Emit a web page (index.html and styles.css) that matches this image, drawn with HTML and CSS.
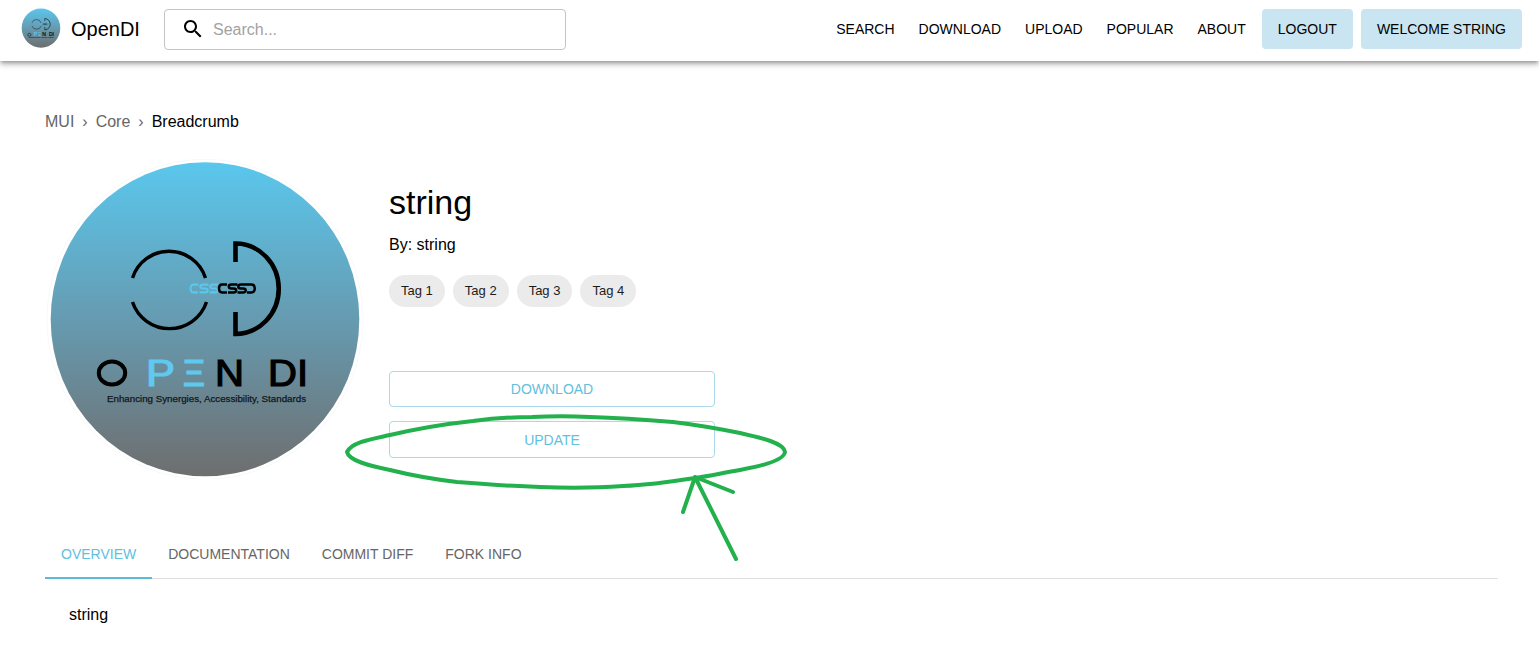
FILE: index.html
```html
<!DOCTYPE html>
<html lang="en">
<head>
<meta charset="utf-8">
<title>OpenDI</title>
<link rel="stylesheet" href="styles.css">
</head>
<body>
<svg class="defs" width="0" height="0" aria-hidden="true">
  <defs>
    <linearGradient id="logoFill" x1="0" y1="0" x2="0" y2="1">
      <stop offset="0" stop-color="#5ac7ed"/>
      <stop offset="0.5" stop-color="#669bb1"/>
      <stop offset="1" stop-color="#6e6e6e"/>
    </linearGradient>
    <symbol id="logo" viewBox="45 159 320 320">
      <ellipse cx="205" cy="319.300" rx="158" ry="160" fill="#fff" stroke="#f6f9fb" stroke-width="1"/>
      <ellipse cx="205" cy="319.300" rx="154.300" ry="157" fill="url(#logoFill)"/>
      <g fill="none" stroke="#000" stroke-width="3.400">
        <path d="M132.500 278A38.300 38.300 0 0 1 205.500 278"/>
        <path d="M132.500 302A39 39 0 0 0 206.500 302"/>
      </g>
      <path d="M235.500 262V243.500A43 45 0 0 1 235.500 334V312" fill="none" stroke="#000" stroke-width="4.600"/>
      <g fill="none" stroke-width="2.100">
        <g stroke="#5cc6ec">
          <path d="M198.500 284.600H193.500Q190.600 284.600 190.600 288.500Q190.600 292.400 193.500 292.400H198"/>
          <path d="M208.500 284.600H203Q200.300 284.600 200.300 286.500Q200.300 288.500 203 288.500H205Q207.700 288.500 207.700 290.500Q207.700 292.400 205 292.400H199.500"/>
          <path d="M218.500 284.600H213Q210.300 284.600 210.300 286.500Q210.300 288.500 213 288.500H215Q217.700 288.500 217.700 290.500Q217.700 292.400 215 292.400H209.500"/>
        </g>
        <g stroke="#000" stroke-width="2.500">
          <path d="M227 284.600H222Q219 284.600 219 288.500Q219 292.400 222 292.400H227"/>
          <path d="M237.500 284.600H231.500Q228.800 284.600 228.800 286.500Q228.800 288.500 231.500 288.500H233.500Q236.200 288.500 236.200 290.500Q236.200 292.400 233.500 292.400H228"/>
          <path d="M247 284.600H241Q238.300 284.600 238.300 286.500Q238.300 288.500 241 288.500H243Q245.700 288.500 245.700 290.500Q245.700 292.400 243 292.400H237.500"/>
          <path d="M247 284.600H251.500Q254.800 284.600 254.800 288.500Q254.800 292.400 251.500 292.400H247"/>
        </g>
      </g>
      <ellipse cx="112" cy="373" rx="13.200" ry="11.500" fill="none" stroke="#000" stroke-width="4"/>
      <text x="146" y="386" class="logo-mark logo-blue" textLength="29" lengthAdjust="spacingAndGlyphs">P</text>
      <text x="183" y="386" class="logo-mark logo-blue" textLength="22" lengthAdjust="spacingAndGlyphs">Ξ</text>
      <text x="215" y="386" class="logo-mark" textLength="29" lengthAdjust="spacingAndGlyphs">N</text>
      <text x="268" y="386" class="logo-mark" textLength="40" lengthAdjust="spacingAndGlyphs">DI</text>
      <text x="107" y="402" class="logo-tag" textLength="199" lengthAdjust="spacingAndGlyphs">Enhancing Synergies, Accessibility, Standards</text>
    </symbol>
  </defs>
</svg>

<header class="topbar">
  <div class="brand">
    <svg class="brand-logo" viewBox="0 0 40 40" role="img" aria-label="OpenDI logo"><use href="#logo" width="40" height="40"/></svg>
    <span class="brand-name">OpenDI</span>
  </div>
  <label class="search">
    <svg class="search-icon" viewBox="0 0 24 24" aria-hidden="true"><path d="M15.500 14h-.79l-.28-.27C15.410 12.590 16 11.110 16 9.500 16 5.910 13.090 3 9.500 3S3 5.910 3 9.500 5.910 16 9.500 16c1.610 0 3.090-.59 4.230-1.570l.27.28v.79l5 4.990L20.490 19l-4.990-5zm-6 0C7.010 14 5 11.990 5 9.500S7.010 5 9.500 5 14 7.010 14 9.500 11.990 14 9.500 14z"/></svg>
    <input class="search-input" type="text" placeholder="Search...">
  </label>
  <nav class="nav">
    <a class="nav-link">SEARCH</a>
    <a class="nav-link">DOWNLOAD</a>
    <a class="nav-link">UPLOAD</a>
    <a class="nav-link">POPULAR</a>
    <a class="nav-link">ABOUT</a>
    <div class="nav-actions">
      <a class="nav-button">LOGOUT</a>
      <a class="nav-button">WELCOME STRING</a>
    </div>
  </nav>
</header>

<main class="page">
  <ol class="crumbs">
    <li class="crumb">MUI</li>
    <li class="crumb-sep">›</li>
    <li class="crumb">Core</li>
    <li class="crumb-sep">›</li>
    <li class="crumb crumb-current">Breadcrumb</li>
  </ol>

  <section class="hero">
    <svg class="hero-logo" viewBox="0 0 320 320" role="img" aria-label="Open DI logo"><use href="#logo" width="320" height="320"/></svg>
    <div class="info">
      <h1 class="title">string</h1>
      <p class="author">By: string</p>
      <ul class="tags">
        <li class="tag">Tag 1</li>
        <li class="tag">Tag 2</li>
        <li class="tag">Tag 3</li>
        <li class="tag">Tag 4</li>
      </ul>
      <div class="actions">
        <button class="action action-download" type="button">DOWNLOAD</button>
        <button class="action action-update" type="button">UPDATE</button>
      </div>
    </div>
  </section>

  <div class="tabs">
    <a class="tab tab-active">OVERVIEW</a>
    <a class="tab">DOCUMENTATION</a>
    <a class="tab">COMMIT DIFF</a>
    <a class="tab">FORK INFO</a>
  </div>
  <p class="panel">string</p>
</main>

<svg class="annotation" viewBox="0 0 1539 672" aria-hidden="true">
  <path d="M347 452C352 442 372 439 390 435C420 428 445 424 473 421C495 418 512 417 532 417C552 416 570 416 590 417C620 418 648 420 673 422C698 425 720 429 740 433C762 438 784 443 785 452C784 460 762 466 740 470C722 473 710 476 695 478C670 482 648 485 623 486C595 488 568 488 540 487C510 486 482 484 457 482C432 479 410 475 390 470C370 466 349 461 347 452Z" fill="none" stroke="#22b14c" stroke-width="4" stroke-linejoin="round"/>
  <path d="M736 559L695 477M695 477L683 512M695 477L733 492" fill="none" stroke="#22b14c" stroke-width="4" stroke-linecap="round"/>
</svg>
</body>
</html>
```

FILE: styles.css
```css
* {
  box-sizing: border-box;
}

html,
body {
  margin: 0;
  padding: 0;
  background: #fff;
}

body {
  position: relative;
  width: 1539px;
  height: 672px;
  overflow: hidden;
  font-family: "Liberation Sans", Arial, sans-serif;
  color: #000;
}

.defs {
  display: block;
  width: 0;
  height: 0;
}

.logo-mark {
  font-family: "Liberation Sans", Arial, sans-serif;
  font-size: 36px;
  fill: #000;
  stroke: #000;
  stroke-width: 1.2px;
}

.logo-blue {
  fill: #5fc9f0;
  stroke: #5fc9f0;
}

.logo-tag {
  font-family: "Liberation Sans", Arial, sans-serif;
  font-size: 9px;
  fill: #10181c;
  stroke: #10181c;
  stroke-width: 0.25px;
}

/* Top bar */
.topbar {
  display: flex;
  align-items: center;
  height: 61px;
  padding: 0 17px 3px 21px;
  background: #fff;
  box-shadow: 0 2px 4px -1px rgba(0, 0, 0, 0.3), 0 4px 5px 0 rgba(0, 0, 0, 0.16), 0 1px 10px 0 rgba(0, 0, 0, 0.1);
}

.brand {
  display: flex;
  align-items: center;
  gap: 10px;
  width: 143px;
  flex: none;
}

.brand-logo {
  width: 40px;
  height: 40px;
  margin-top: -3px;
  flex: none;
}

.brand-name {
  font-size: 20px;
}

.search {
  display: flex;
  align-items: center;
  gap: 8px;
  width: 402px;
  height: 41px;
  padding: 0 16px;
  border: 1px solid #c4c4c4;
  border-radius: 4px;
  flex: none;
}

.search-icon {
  width: 24px;
  height: 24px;
  flex: none;
}

.search-input {
  flex: 1;
  min-width: 0;
  border: 0;
  outline: 0;
  padding: 1px 0 0;
  font: 16px "Liberation Sans", Arial, sans-serif;
  background: transparent;
}

.search-input::placeholder {
  color: #a2a2a2;
  opacity: 1;
}

.nav {
  display: flex;
  align-items: center;
  gap: 24px;
  margin-left: auto;
  font-size: 14px;
}

.nav-actions {
  display: flex;
  gap: 8px;
  margin-left: -8px;
}

.nav-button {
  display: flex;
  align-items: center;
  height: 40px;
  padding: 0 16px;
  background: #c9e5f1;
  border-radius: 4px;
}

/* Page */
.page {
  padding: 52px 41px 0 45px;
}

.crumbs {
  display: flex;
  gap: 8px;
  margin: 0;
  padding: 0;
  list-style: none;
  font-size: 16px;
  line-height: 18px;
  color: #666;
}

.crumb-current {
  color: #000;
}

.hero {
  display: flex;
  gap: 24px;
  margin-top: 28px;
}

.hero-logo {
  display: block;
  width: 320px;
  height: 320px;
  flex: none;
}

.info {
  width: 326px;
  padding-top: 23px;
}

.title {
  margin: 0;
  font-size: 34px;
  font-weight: 400;
  line-height: 40px;
}

.author {
  margin: 14px 0 0;
  font-size: 16px;
  line-height: 18px;
}

.tags {
  display: flex;
  gap: 8px;
  margin: 21px 0 0;
  padding: 0;
  list-style: none;
}

.tag {
  display: flex;
  align-items: center;
  height: 32px;
  padding: 0 12px 1px;
  border-radius: 16px;
  background: #ebebeb;
  font-size: 13px;
  color: #1c1c1c;
}

.actions {
  display: flex;
  flex-direction: column;
  gap: 14px;
  margin-top: 64px;
}

.action {
  width: 100%;
  padding: 0;
  border: 1px solid #a9d9ea;
  border-radius: 4px;
  background: #fff;
  color: #5fc0e0;
  font: 14px "Liberation Sans", Arial, sans-serif;
}

.action-download {
  height: 36px;
}

.action-update {
  height: 37px;
}

.tabs {
  display: flex;
  height: 48px;
  margin-top: 52px;
  border-bottom: 1px solid #e0e0e0;
}

.tab {
  display: flex;
  align-items: center;
  height: 48px;
  padding: 0 16px;
  border-bottom: 2px solid transparent;
  font-size: 14px;
  color: #666;
}

.tab-active {
  color: #5fc0e0;
  border-bottom-color: #5cb9da;
}

.panel {
  margin: 27px 0 0 24px;
  font-size: 16px;
  line-height: 18px;
}

/* Hand-drawn markup layered over the page */
.annotation {
  position: absolute;
  top: 0;
  left: 0;
  width: 1539px;
  height: 672px;
  pointer-events: none;
}
```
